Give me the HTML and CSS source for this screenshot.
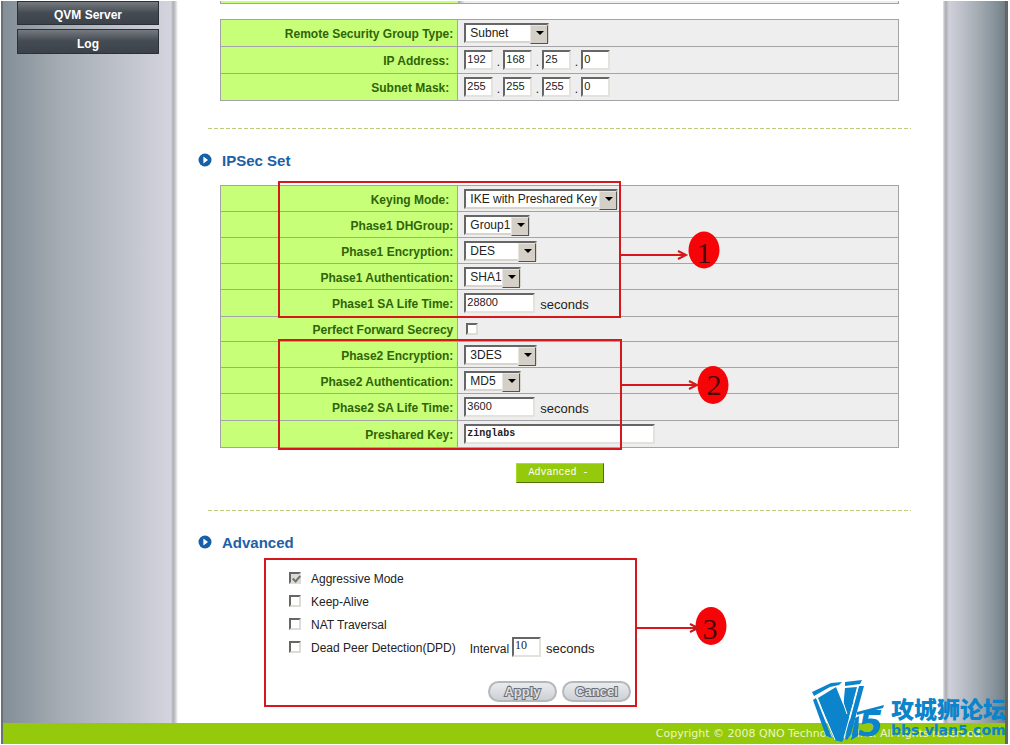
FILE: index.html
```html
<!DOCTYPE html>
<html lang="en">
<head>
<meta charset="utf-8">
<title>IPSec Set</title>
<link rel="stylesheet" href="styles.css">
</head>
<body>
<div class="page">
  <div class="columns">
    <nav class="sidebar">
      <a href="#" class="nav-link">QVM Server</a>
      <a href="#" class="nav-link">Log</a>
    </nav>

    <main class="main">
      <div class="table-end"></div>

      <table class="settings roomy">
        <tr><th><label for="rtype">Remote Security Group Type:</label></th>
          <td><span class="select w-85"><select id="rtype"><option>Subnet</option></select></span></td></tr>
        <tr><th class="inset">IP Address:</th>
          <td><div class="octets"><input aria-label="IP 1" value="192"><span>.</span><input aria-label="IP 2" value="168"><span>.</span><input aria-label="IP 3" value="25"><span>.</span><input aria-label="IP 4" value="0"></div></td></tr>
        <tr><th class="inset">Subnet Mask:</th>
          <td><div class="octets"><input aria-label="Mask 1" value="255"><span>.</span><input aria-label="Mask 2" value="255"><span>.</span><input aria-label="Mask 3" value="255"><span>.</span><input aria-label="Mask 4" value="0"></div></td></tr>
      </table>

      <hr class="divider">

      <h2 class="heading">
        <svg width="14" height="14" viewBox="0 0 14 14"><circle cx="7" cy="7" r="6.5" fill="#1560a8"/><path d="M5.4 3.4 10 7l-4.6 3.6z" fill="#fff"/></svg>
        IPSec Set
      </h2>

      <div class="annotated">
        <table class="settings">
          <tr><th class="inset"><label for="key">Keying Mode:</label></th>
            <td><span class="select w-154"><select id="key"><option>IKE with Preshared Key</option></select></span></td></tr>
          <tr><th><label for="dh">Phase1 DHGroup:</label></th>
            <td><span class="select w-66"><select id="dh"><option>Group1</option></select></span></td></tr>
          <tr><th><label for="enc1">Phase1 Encryption:</label></th>
            <td><span class="select w-73"><select id="enc1"><option>DES</option></select></span></td></tr>
          <tr><th><label for="auth1">Phase1 Authentication:</label></th>
            <td><span class="select w-57"><select id="auth1"><option>SHA1</option></select></span></td></tr>
          <tr class="tall"><th><label for="life1">Phase1 SA Life Time:</label></th>
            <td><div class="field"><input id="life1" class="w-71" value="28800"><span>seconds</span></div></td></tr>
          <tr class="short"><th><label for="pfs">Perfect Forward Secrecy</label></th>
            <td><input id="pfs" type="checkbox"></td></tr>
          <tr><th><label for="enc2">Phase2 Encryption:</label></th>
            <td><span class="select w-73"><select id="enc2"><option>3DES</option></select></span></td></tr>
          <tr><th><label for="auth2">Phase2 Authentication:</label></th>
            <td><span class="select w-57"><select id="auth2"><option>MD5</option></select></span></td></tr>
          <tr class="tall"><th><label for="life2">Phase2 SA Life Time:</label></th>
            <td><div class="field"><input id="life2" class="w-71" value="3600"><span>seconds</span></div></td></tr>
          <tr class="tall"><th><label for="psk">Preshared Key:</label></th>
            <td><div class="field"><input id="psk" class="w-191 mono" value="zinglabs"></div></td></tr>
        </table>
        <svg class="marks marks-table" width="460" height="272" viewBox="0 0 460 272">
          <g fill="none" stroke="#d4181c" stroke-width="2">
            <rect x="2" y="2" width="341" height="135"/>
            <rect x="2" y="160" width="342" height="109"/>
            <path d="M344 75H408M401 71l8 4-8 4M345 205H419M412 201l8 4-8 4"/>
          </g>
          <ellipse cx="427" cy="70" rx="15.5" ry="18.5" fill="#f60508"/>
          <ellipse cx="436" cy="205" rx="15.5" ry="19" fill="#f60508"/>
          <g class="mark-number"><text x="427" y="83">1</text><text x="437" y="215">2</text></g>
        </svg>
      </div>

      <div class="toggle-row"><button type="button" class="toggle">Advanced -</button></div>

      <hr class="divider">

      <h2 class="heading">
        <svg width="14" height="14" viewBox="0 0 14 14"><circle cx="7" cy="7" r="6.5" fill="#1560a8"/><path d="M5.4 3.4 10 7l-4.6 3.6z" fill="#fff"/></svg>
        Advanced
      </h2>

      <div class="annotated advanced">
        <div class="option"><input type="checkbox" id="agg" checked disabled><label for="agg">Aggressive Mode</label></div>
        <div class="option"><input type="checkbox" id="keep"><label for="keep">Keep-Alive</label></div>
        <div class="option"><input type="checkbox" id="nat"><label for="nat">NAT Traversal</label></div>
        <div class="option"><input type="checkbox" id="dpd"><label for="dpd">Dead Peer Detection(DPD)</label>
          <div class="interval"><label for="interval">Interval</label><input id="interval" class="w-29 serif" value="10"><span>seconds</span></div></div>
        <div class="actions"><button type="button">Apply</button><button type="button">Cancel</button></div>
        <svg class="marks marks-advanced" width="466" height="152" viewBox="0 0 466 152">
          <g fill="none" stroke="#d4181c" stroke-width="2">
            <rect x="2" y="2" width="371" height="147"/>
            <path d="M374 71H434"/>
          </g>
          <ellipse cx="448" cy="69" rx="15.5" ry="19" fill="#f60508"/>
          <path d="M427 67l8 4-8 4" fill="none" stroke="#c4181c" stroke-width="2"/>
          <g class="mark-number"><text x="447" y="82">3</text></g>
        </svg>
      </div>
    </main>

    <div class="rail"></div>
  </div>

  <footer class="footer">Copyright © 2008 QNO Technology, Inc. All rights reserved.</footer>
</div>

<div class="watermark">
  <svg width="80" height="66" viewBox="0 0 80 66">
    <g fill="#0b84cb">
      <path d="M1 14 20 5l11-1-3 3-9 2L3 18z"/>
      <path d="M34 4 51 2l-2 4-15 2z"/>
      <path d="M2 22 5 20 21 60 15 58z"/>
      <path d="M7 20 25 9l15 37-9 18-8-2z"/>
      <path d="M34 10l12-1-9 34-5-12z"/>
      <path d="M48 8h5L40 56l-4 6-2-1z"/>
      <path d="M46 34 73 27l-1 3-26 7z"/>
      <path d="M44 40l4-2-1 20-7 4z"/>
      <g class="mark-v"><text x="11" y="56">V</text></g>
      <g class="mark-five"><text x="47" y="58">5</text></g>
    </g>
    <path d="m6 20 18 42M27 9l9 27M47 9 33 60" stroke="#fff" stroke-width="1" fill="none"/>
  </svg>
  <div class="watermark-text"><span class="zh" lang="zh">攻城狮论坛</span><span class="site">bbs.vlan5.com</span></div>
</div>
</body>
</html>
```
FILE: styles.css
```css
* { box-sizing: border-box; }

body {
  margin: 0;
  padding: 1px 2px 1px 1px;
  min-height: 100vh;
  display: flex;
  position: relative;
  background: #fff;
  color: #222;
  font: 12px/16px "Liberation Sans", Arial, sans-serif;
}

.page {
  flex: 1;
  display: flex;
  flex-direction: column;
  border-left: 2px solid #697175;
  border-right: 3px solid #60666a;
}

.columns { flex: 1; display: flex; }

.sidebar {
  flex: none;
  width: 175px;
  padding-left: 14px;
  display: flex;
  flex-direction: column;
  gap: 4px;
  background: linear-gradient(to right, #838e97 0, #a6adb5 60px, #d3d4de 168px, #aeb0b5 170px, #c4c6ca 172px, #fff 175px);
}

.nav-link {
  width: 142px;
  height: 25px;
  padding-top: 4px;
  border: 1px solid #2b3137;
  background: linear-gradient(#747a7f 0, #454b52 11px, #3c4249 100%);
  color: #fff;
  font-weight: bold;
  line-height: 20px;
  text-align: center;
  text-decoration: none;
}
.nav-link:first-child { height: 24px; padding-top: 3px; }

.main { flex: 1; min-width: 0; padding: 0 32px 15px 30px; }

.rail {
  flex: none;
  width: 62px;
  background: linear-gradient(to right, #e4e5e6 0, #b4b6ba 2px, #aeb0b5 3px, #cfd0da 6px, #a6adb5 34px, #7f8b94 56px, #737c82 62px);
}

.table-end {
  height: 3px;
  margin: 0 12px 15px;
  border: solid #a3a3a8;
  border-width: 0 1px 1px;
  background: linear-gradient(to right, #c8ff78 35%, #a3a3a8 35%, #eee 36%);
}

.settings {
  width: calc(100% - 24px);
  margin: 0 12px;
  border-collapse: collapse;
  table-layout: fixed;
}
.settings tr { height: 26px; }
.settings.roomy tr, .settings .tall { height: 27px; }
.settings .short { height: 25px; }
.settings th, .settings td { padding: 0 6px; border: 1px solid #a3a3a8; vertical-align: middle; }
.settings th {
  width: 35%;
  padding-top: 2px;
  padding-right: 4px;
  background: #c8ff78;
  color: #2f6508;
  text-align: right;
}
.settings th.inset { padding-right: 8px; }
.settings td { background: #eee; }

.select { display: block; position: relative; height: 20px; }
.select select {
  appearance: none;
  width: 100%;
  height: 20px;
  padding: 0 0 0 4px;
  border: 2px solid;
  border-color: #666 #d8d5ce #d8d5ce #666;
  border-radius: 0;
  background: #fff;
  color: #222;
  font: 12px/16px "Liberation Sans", Arial, sans-serif;
}
.select::after {
  content: "";
  position: absolute;
  top: 2px;
  right: 1px;
  width: 16px;
  height: 17px;
  border: 1px solid;
  border-color: #e8e5de #55534f #55534f #e8e5de;
  background: #d4d0c8;
  pointer-events: none;
}
.select::before {
  content: "";
  position: absolute;
  z-index: 1;
  top: 8px;
  right: 5px;
  border: 4px solid transparent;
  border-top-color: #000;
  border-bottom: 0;
  pointer-events: none;
}

input:not([type="checkbox"]) {
  height: 20px;
  padding: 0 0 3px 1px;
  border: 2px solid;
  border-color: #666 #e4e2dc #e4e2dc #666;
  background: #fff;
  color: #222;
  font: 11px/14px "Liberation Sans", Arial, sans-serif;
}
input[type="checkbox"] {
  appearance: none;
  display: block;
  flex: none;
  width: 12px;
  height: 12px;
  margin: 0;
  border: 2px solid;
  border-color: #666 #dedcd6 #dedcd6 #666;
  background: #fff;
}
.settings input[type="checkbox"] { margin-left: 2px; }
input[type="checkbox"]:checked {
  background: #dcdad4;
  position: relative;
}
input[type="checkbox"]:checked::after {
  content: "";
  position: absolute;
  left: 3px;
  top: 0;
  width: 3px;
  height: 6px;
  border: solid #77756f;
  border-width: 0 2px 2px 0;
  transform: rotate(42deg);
}

.octets { display: flex; }
.octets input { width: 29px; }
.octets span { width: 10px; padding-top: 4px; text-align: center; }

.field { display: flex; gap: 5px; }
.field span, .interval span { padding-top: 4px; font-size: 13px; }

.w-29 { width: 29px; }
.w-57 { width: 57px; }
.w-66 { width: 66px; }
.w-71 { width: 71px; }
.w-73 { width: 73px; }
.w-85 { width: 85px; }
.w-154 { width: 154px; }
.w-191 { width: 191px; }
input.mono:not([type="checkbox"]) { padding-bottom: 1px; font: bold 10px/14px "Liberation Mono", monospace; }
input.serif:not([type="checkbox"]) { font: 12px/14px "Liberation Serif", serif; }

.divider {
  height: 1px;
  margin: 27px 0 0;
  border: 0;
  background: repeating-linear-gradient(to right, #bccb7c 0 4px, transparent 4px 6px);
}

.heading {
  display: flex;
  gap: 10px;
  margin: 22px 0 14px -10px;
  color: #1c60a6;
  font-size: 15px;
  line-height: 20px;
}
.heading svg { margin-top: 2px; }

.annotated { position: relative; }
.marks { position: absolute; pointer-events: none; }
.marks-table { left: 69px; top: -5px; }
.marks-advanced { left: 55px; top: -10px; }
.mark-number { fill: #4c0808; font: 30px "Liberation Serif", serif; text-anchor: middle; }

.toggle-row { margin-top: 15px; text-align: center; }
.toggle {
  display: block;
  width: 88px;
  height: 20px;
  margin: 0 auto;
  padding: 0 2px 0 0;
  border: 1px solid;
  border-color: #a8dc30 #54700c #54700c #a8dc30;
  background: #95ca0c;
  color: #fff;
  font: 10px/16px "Liberation Mono", monospace;
}

.advanced { padding: 3px 0 0 81px; }
.option { display: flex; height: 23px; gap: 10px; }
.option > input { margin-top: 2px; }
.option > label { line-height: 18px; }
.interval { display: flex; gap: 3px; padding-left: 4px; line-height: 18px; }
.interval label { padding-top: 1px; }
.interval input { margin-top: -2px; }
.interval span { padding: 1px 0 0 2px; }

.actions { display: flex; gap: 5px; padding: 19px 0 0 199px; }
.actions button {
  width: 69px;
  height: 21px;
  padding: 0;
  border: 2px solid #b5b8bb;
  border-radius: 11px;
  background: linear-gradient(#e9ebee, #cdd0d6);
  color: #dcdfe3;
  font: bold 13px/15px "Liberation Sans", Arial, sans-serif;
  -webkit-text-stroke: 2px #6b6f74;
  paint-order: stroke fill;
}

.footer {
  height: 21px;
  padding-right: 21px;
  background: #95ca0c;
  color: #eaf6c0;
  font: 11px/22px "DejaVu Sans", Verdana, sans-serif;
  text-align: right;
}

.watermark {
  position: absolute;
  right: 4px;
  bottom: 1px;
  display: flex;
  color: #0b84cb;
}
.watermark svg { overflow: visible; }
.watermark-text { display: flex; flex-direction: column; padding-top: 17px; }
.zh { font: 900 23px/26px "Noto Sans CJK SC", sans-serif; }
.site { font: bold 14px/18px "DejaVu Sans", Verdana, sans-serif; }
.mark-v { font: bold 48px "Liberation Sans", Arial, sans-serif; }
.mark-five { font: italic bold 36px "DejaVu Sans", Verdana, sans-serif; }
```
